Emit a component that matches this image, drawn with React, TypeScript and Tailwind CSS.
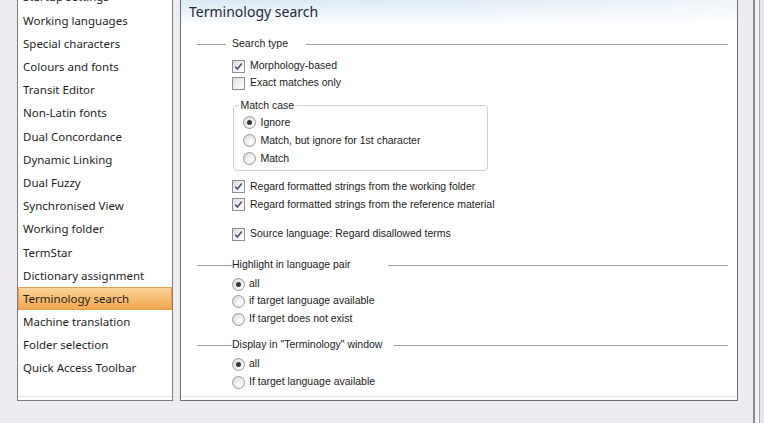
import React from 'react';

const NAV_ITEMS = [
  'Startup settings',
  'Working languages',
  'Special characters',
  'Colours and fonts',
  'Transit Editor',
  'Non-Latin fonts',
  'Dual Concordance',
  'Dynamic Linking',
  'Dual Fuzzy',
  'Synchronised View',
  'Working folder',
  'TermStar',
  'Dictionary assignment',
  'Terminology search',
  'Machine translation',
  'Folder selection',
  'Quick Access Toolbar',
];

const SELECTED = 'Terminology search';

function Checkbox({ checked }: { checked: boolean }) {
  return (
    <span className="flex h-[13px] w-[13px] shrink-0 items-center justify-center border border-[#8f8f8f] bg-[linear-gradient(135deg,#dcdcdc_0%,#f4f4f4_60%,#ffffff_100%)]">
      {checked && (
        <svg width="9" height="9" viewBox="0 0 9 9">
          <path d="M1.2 4.6 L3.4 7 L7.8 1.4" fill="none" stroke="#4d5a6e" strokeWidth="1.6" />
        </svg>
      )}
    </span>
  );
}

function Radio({ checked }: { checked: boolean }) {
  return (
    <span className="flex h-[13px] w-[13px] shrink-0 items-center justify-center rounded-full border border-[#9b9b9b] bg-[radial-gradient(circle_at_65%_65%,#ffffff_0%,#e8e8e8_55%,#cfcfcf_100%)]">
      {checked && <span className="h-[5px] w-[5px] rounded-full bg-[#2f3440]" />}
    </span>
  );
}

function CheckRow({ label, checked, mt }: { label: string; checked: boolean; mt: string }) {
  return (
    <div className={`flex h-[17px] items-center gap-[5px] pl-[51px] ${mt}`}>
      <Checkbox checked={checked} />
      <span>{label}</span>
    </div>
  );
}

function RadioRow({ label, checked, mt }: { label: string; checked: boolean; mt: string }) {
  return (
    <div className={`flex h-[17px] items-center gap-[4px] pl-[51px] ${mt}`}>
      <Radio checked={checked} />
      <span>{label}</span>
    </div>
  );
}

function SectionHeading({
  title,
  mt,
  leftLine,
  gapAfter,
}: {
  title: string;
  mt: string;
  leftLine: string;
  gapAfter: string;
}) {
  return (
    <div className={`flex h-[17px] items-center pl-[16px] pr-[9px] ${mt}`}>
      <span className={`h-px bg-[#a0a0a0] ${leftLine}`} />
      <span className="shrink-0">{title}</span>
      <span className={`h-px flex-1 bg-[#a0a0a0] ${gapAfter}`} />
    </div>
  );
}

export default function App() {
  return (
    <div className="flex h-[423px] w-[764px] items-start overflow-hidden bg-[#eeecf2] font-['Liberation_Sans',Arial,sans-serif] text-[10.5px] text-[#1b1b1b]">
      <div className="w-[17px] shrink-0" />

      {/* Options tree */}
      <div className="mt-[-10px] h-[411px] w-[156px] shrink-0 border border-[#7c7c7c] bg-white font-['Noto_Sans',sans-serif] text-[11.5px] text-[#1e1e1e] shadow-[inset_0_-3px_0_#fff,inset_0_-4px_0_#e6e6e6]">
        <div className="mt-[-5.5px]">
          {NAV_ITEMS.map((item) =>
            item === SELECTED ? (
              <div
                key={item}
                className="flex h-[23.2px] items-center border border-[#e3a04f] bg-[linear-gradient(180deg,#fbd49a_0%,#f7bd72_50%,#f2a650_100%)] pl-[4px]"
              >
                {item}
              </div>
            ) : (
              <div key={item} className="flex h-[23.2px] items-center pl-[5px]">
                {item}
              </div>
            ),
          )}
        </div>
      </div>

      <div className="w-[7px] shrink-0" />

      {/* Settings page */}
      <div className="mt-[-10px] flex h-[411px] w-[558px] shrink-0 flex-col border border-[#6f6f6f] bg-white shadow-[inset_0_-3px_0_#fff,inset_0_-4px_0_#e4e4e4]">
        <div className="h-[36px] shrink-0 bg-[linear-gradient(90deg,rgba(255,255,255,0)_0%,rgba(255,255,255,0.15)_50%,rgba(255,255,255,0.6)_100%),linear-gradient(180deg,#cddff0_0%,#e2edf6_40%,#ffffff_100%)] pl-[8px] pt-[11px] font-['Noto_Sans',sans-serif] text-[14px] leading-[20px] text-[#1e2a36]">
          Terminology search
        </div>

        <SectionHeading title="Search type" mt="mt-[8.5px]" leftLine="w-[29px] mr-[6px]" gapAfter="ml-[18px]" />
        <CheckRow label="Morphology-based" checked mt="mt-[5px]" />
        <CheckRow label="Exact matches only" checked={false} mt="mt-0" />

        <fieldset className="ml-[51.5px] mt-[6.5px] w-[255px] rounded-[4px] border border-[#cfcfcf] pb-[2px]">
          <legend className="ml-[5px] px-[2px] leading-[14px]">Match case</legend>
          <div className="mt-[1.5px] flex h-[18px] items-center gap-[5px] pl-[9px]">
            <Radio checked />
            <span>Ignore</span>
          </div>
          <div className="flex h-[18px] items-center gap-[5px] pl-[9px]">
            <Radio checked={false} />
            <span>Match, but ignore for 1st character</span>
          </div>
          <div className="flex h-[18px] items-center gap-[5px] pl-[9px]">
            <Radio checked={false} />
            <span>Match</span>
          </div>
        </fieldset>

        <CheckRow label="Regard formatted strings from the working folder" checked mt="mt-[7.5px]" />
        <CheckRow label="Regard formatted strings from the reference material" checked mt="mt-[1px]" />
        <CheckRow label="Source language: Regard disallowed terms" checked mt="mt-[12.5px]" />

        <SectionHeading title="Highlight in language pair" mt="mt-[14px]" leftLine="w-[35px]" gapAfter="ml-[37px]" />
        <RadioRow label="all" checked mt="mt-[2px]" />
        <RadioRow label="if target language available" checked={false} mt="mt-0" />
        <RadioRow label="If target does not exist" checked={false} mt="mt-[1px]" />

        <SectionHeading title={'Display in "Terminology" window'} mt="mt-[9px]" leftLine="w-[35px]" gapAfter="ml-[12px]" />
        <RadioRow label="all" checked mt="mt-[2px]" />
        <RadioRow label="If target language available" checked={false} mt="mt-[1px]" />
      </div>

      <div className="w-[15px] shrink-0" />

      {/* Window frame edge */}
      <div className="flex h-full shrink-0">
        <div className="h-full w-[2px] bg-[#8e8b95]" />
        <div className="h-full w-[4px] bg-[#f3f1f6]" />
        <div className="h-full w-px bg-[#a9a6b0]" />
        <div className="h-full w-[4px] bg-[#e6e4ea]" />
      </div>
    </div>
  );
}
